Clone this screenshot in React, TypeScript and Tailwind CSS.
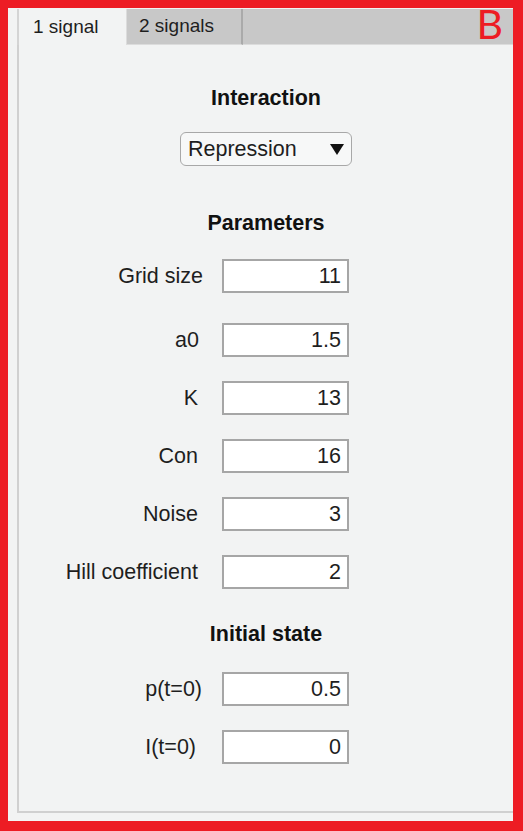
const font = { fontFamily: '"Liberation Sans", Arial, sans-serif' };

type Row = { label: string; value: string; pr: string };

const params: Row[] = [
  { label: "Grid size", value: "11", pr: "pr-[0px]" },
  { label: "a0", value: "1.5", pr: "pr-[4px]" },
  { label: "K", value: "13", pr: "pr-[5px]" },
  { label: "Con", value: "16", pr: "pr-[5px]" },
  { label: "Noise", value: "3", pr: "pr-[5px]" },
  { label: "Hill coefficient", value: "2", pr: "pr-[5px]" },
];

const initial: Row[] = [
  { label: "p(t=0)", value: "0.5", pr: "pr-[1px]" },
  { label: "I(t=0)", value: "0", pr: "pr-[7px]" },
];

function Field({ row, top }: { row: Row; top: string }) {
  return (
    <div className={`flex items-center ${top}`}>
      <div className={`w-[184px] text-right text-[21.5px] leading-[25px] text-[#1e1e1e] ${row.pr}`}>
        {row.label}
      </div>
      <div className="ml-[19px] flex h-[34px] w-[127px] items-center justify-end border-2 border-[#a6a6a6] bg-white pr-[6px] text-[21.5px] leading-[25px] text-[#1e1e1e]">
        {row.value}
      </div>
    </div>
  );
}

function Heading({ children, top }: { children: string; top: string }) {
  return (
    <div className={`text-center text-[21.5px] font-bold leading-[25px] text-[#111] ${top}`}>
      {children}
    </div>
  );
}

export default function App() {
  return (
    <div className="h-[831px] w-[523px] bg-[#ed1c24] pt-[8px] pr-[10px] pb-[10px] pl-[8px]" style={font}>
      <div className="relative flex h-full flex-col bg-[#f2f3f3] pt-[1px] pb-[8px] pl-[9px]">
        {/* Tabs */}
        <div className="flex h-[36px] shrink-0 bg-[#c8c8c8]">
          <div className="flex w-[109px] items-center border-l-2 border-[#d4d4d4] bg-[#f2f3f3] pl-[14px] text-[19px] text-[#1e1e1e]">
            1 signal
          </div>
          <div className="flex w-[117px] items-center border-r-2 border-b border-l border-r-[#aaaaaa] border-b-[#dcdcdc] border-l-[#dcdcdc] pl-[12px] text-[19px] text-[#1e1e1e]">
            2 signals
          </div>
          <div className="flex-1 border-b border-[#dcdcdc]" />
        </div>
        <div
          className="absolute top-[-9px] right-[10px] text-[41px] font-normal leading-[50px] text-[#ed1c24]"
          style={{ fontFamily: "Lato, 'Open Sans', sans-serif" }}
        >
          B
        </div>

        {/* Panel */}
        <div className="flex flex-1 flex-col border-b-2 border-l-2 border-[#d0d0d0] bg-[#f2f3f3]">
          <Heading top="mt-[41px]">Interaction</Heading>
          <div className="mt-[21px] flex justify-center">
            <div className="flex h-[34px] w-[172px] items-center justify-between rounded-[6px] border border-[#a8a8a8] bg-[#f7f8f8] pr-[7px] pl-[7px] text-[21.5px] text-[#1e1e1e]">
              <span>Repression</span>
              <svg width="14" height="11" viewBox="0 0 14 11">
                <path d="M0 0 H14 L7 11 Z" fill="#111" />
              </svg>
            </div>
          </div>

          <Heading top="mt-[45px]">Parameters</Heading>
          {params.map((r, i) => (
            <Field key={r.label} row={r} top={i === 0 ? "mt-[23px]" : i === 1 ? "mt-[30px]" : "mt-[24px]"} />
          ))}

          <Heading top="mt-[33px]">Initial state</Heading>
          {initial.map((r, i) => (
            <Field key={r.label} row={r} top={i === 0 ? "mt-[25px]" : "mt-[24px]"} />
          ))}
        </div>
      </div>
    </div>
  );
}
